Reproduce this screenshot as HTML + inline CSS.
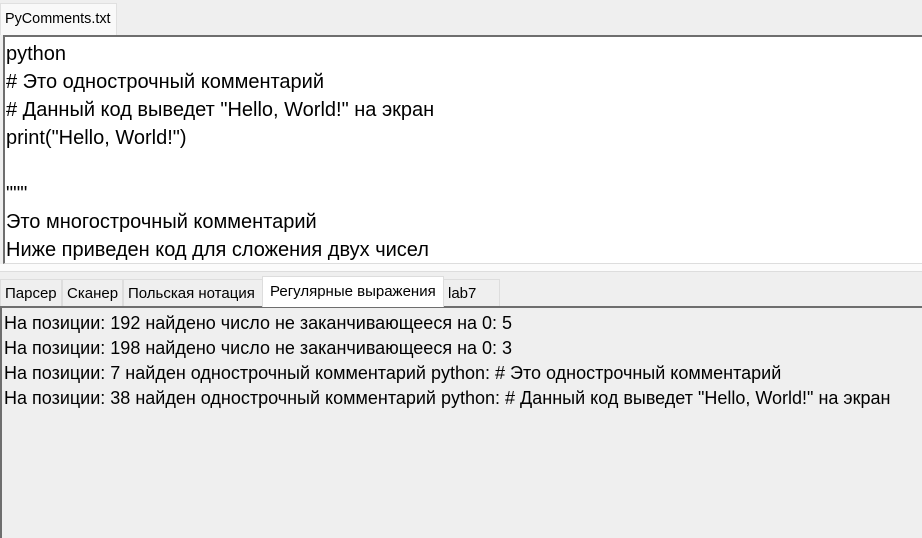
<!DOCTYPE html>
<html><head><meta charset="utf-8"><style>
body{margin:0;width:922px;height:536px;background:#efefef;position:relative;overflow:hidden;font-family:"Liberation Sans","Noto Sans CJK SC",sans-serif;color:#000}
.abs{position:absolute}
.tab1{left:0;top:3px;width:117px;height:32px;background:#f9f9f9;border:1px solid #e0e0e0;border-bottom:none;font-size:14.4px;line-height:30px;padding-left:4px;box-sizing:border-box}
.ed{left:3px;top:35px;width:925px;height:229px;background:#fff;border-top:2px solid #6e6e6e;border-left:2px solid #6e6e6e;box-sizing:border-box;border-bottom:1px solid #ddd}
.ed div{font-size:20px;height:28px;line-height:28px;padding-left:1px;white-space:pre}
.strip{left:0;top:264px;width:922px;height:7px;background:#fbfbfb;border-bottom:1px solid #ddd}
.t{top:279px;height:27px;font-size:15px;line-height:27px;border:1px solid #ddd;border-bottom:none;box-sizing:border-box;padding-left:4px;background:#efefef;white-space:nowrap;overflow:hidden}
.sel{top:276px;height:31px;background:#fff;line-height:30px;z-index:2}
.out{left:0;top:306px;width:924px;height:232px;border-top:2px solid #6e6e6e;border-left:2px solid #6e6e6e;box-sizing:border-box;background:#efefef}
.out div{font-size:18px;height:25px;line-height:25px;padding-left:2px;white-space:pre}
</style></head><body>
<div class="abs tab1">PyComments.txt</div>
<div class="abs ed"><div style="padding-top:3px">python</div><div># Это однострочный комментарий</div><div># Данный код выведет "Hello, World!" на экран</div><div>print("Hello, World!")</div><div></div><div>"""</div><div>Это многострочный комментарий</div><div>Ниже приведен код для сложения двух чисел</div></div>
<div class="abs strip"></div>
<div class="abs t" style="left:0;width:62px">Парсер</div>
<div class="abs t" style="left:62px;width:61px">Сканер</div>
<div class="abs t" style="left:123px;width:140px">Польская нотация</div>
<div class="abs t sel" style="left:262px;width:182px;padding-left:7px">Регулярные выражения</div>
<div class="abs t" style="left:443px;width:57px">lab7</div>
<div class="abs out"><div style="margin-top:3px">На позиции: 192 найдено число не заканчивающееся на 0: 5</div><div>На позиции: 198 найдено число не заканчивающееся на 0: 3</div><div>На позиции: 7 найден однострочный комментарий python: # Это однострочный комментарий</div><div>На позиции: 38 найден однострочный комментарий python: # Данный код выведет "Hello, World!" на экран</div></div>
</body></html>
